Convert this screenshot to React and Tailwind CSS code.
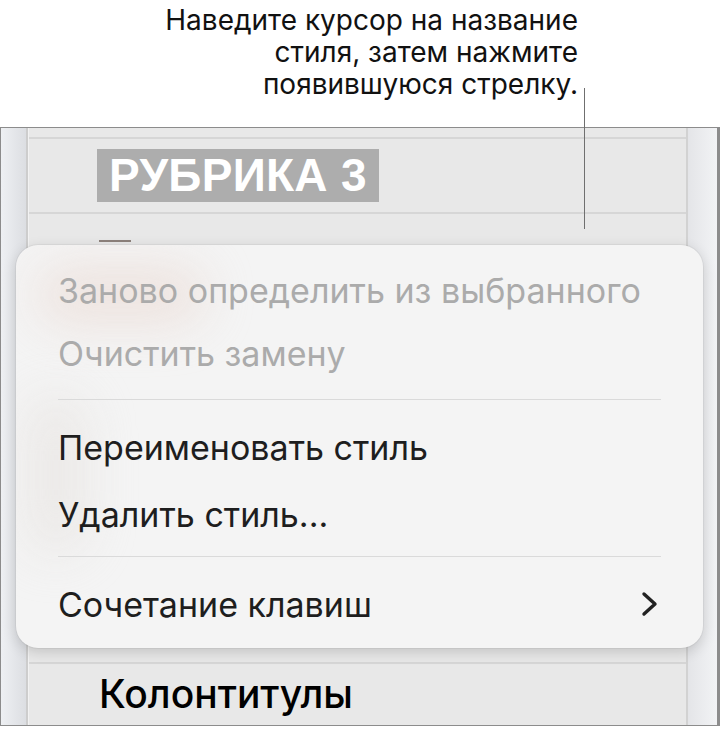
import { useState } from "react";

const MENU = [
  { label: "Заново определить из выбранного", disabled: true, h: "h-[62px]" },
  { label: "Очистить замену", disabled: true, h: "h-[64px]" },
  { sep: true, cls: "mt-[14px] mb-[13px]" },
  { label: "Переименовать стиль", h: "h-[69px]" },
  { label: "Удалить стиль...", h: "h-[64px]" },
  { sep: true, cls: "mt-[10px]" },
  { label: "Сочетание клавиш", h: "h-[90px] pt-[4px]", submenu: true },
];

function Chevron() {
  return (
    <svg width="18" height="26" viewBox="0 0 18 26" className="shrink-0">
      <polyline
        points="3,3 14,13 3,23"
        fill="none"
        stroke="#222"
        strokeWidth="3.4"
        strokeLinecap="round"
        strokeLinejoin="round"
      />
    </svg>
  );
}

function StyleMenu() {
  const [hover, setHover] = useState(null);

  return (
    <div className="absolute left-[16px] top-[245px] w-[687px] h-[403px] rounded-[22px] bg-[#f4f4f4] shadow-[0_4px_14px_rgba(0,0,0,0.16),0_0_0_1px_rgba(0,0,0,0.04)] overflow-hidden pt-[14px]">
      {/* blurred content showing through the menu */}
      <div className="absolute left-[20px] top-[20px] w-[170px] h-[60px] rounded-full bg-[#ead9d2] opacity-60 blur-xl" />
      <div className="absolute left-[10px] top-[150px] w-[60px] h-[160px] rounded-full bg-[#e6e2df] opacity-60 blur-xl" />

      <div className="relative flex flex-col">
        {MENU.map((item, i) =>
          item.sep ? (
            <div key={i} className={`mx-[42px] h-px bg-[#dadada] ${item.cls}`} />
          ) : (
            <div
              key={i}
              onMouseEnter={() => setHover(i)}
              onMouseLeave={() => setHover(null)}
              className={`flex items-center justify-between pl-[42px] pr-[44px] text-[34px] ${item.h} ${
                item.disabled ? "text-[#ababab]" : "text-[#1e1e1e]"
              } ${hover === i && !item.disabled ? "bg-[#ececec]" : ""}`}
            >
              <span>{item.label}</span>
              {item.submenu && <Chevron />}
            </div>
          )
        )}
      </div>
    </div>
  );
}

export default function App() {
  return (
    <div
      className="relative w-[721px] h-[729px] bg-white overflow-hidden"
      style={{ fontFamily: "Inter, 'Noto Sans', sans-serif" }}
    >
      {/* callout */}
      <div className="h-[127px] pt-[4px] pr-[143px] text-right text-[28px] leading-[32px] text-[#111]">
        <p>Наведите курсор на название</p>
        <p>стиля, затем нажмите</p>
        <p>появившуюся стрелку.</p>
      </div>

      {/* style list panel */}
      <div className="flex w-[720px] h-[599px] border-l border-t border-b border-r-[3px] border-[#8c8c8c]">
        <div className="w-[27px] bg-gradient-to-r from-[#eef0f3] to-[#dcdee2] border-r-2 border-[#cdcdcd]" />
        <div className="w-px bg-[#f2f2f2]" />
        <div className="flex-1 flex flex-col bg-[#e8e8e8]">
          <div className="h-[11px] border-b-2 border-[#d6d6d6]" />
          <div className="h-[75px] flex items-center pl-[68px] border-b-2 border-[#d6d6d6]">
            <span
              className="bg-[#adadad] text-white font-bold text-[46px] leading-[53px] px-[12px] tracking-[0.3px]"
              style={{ fontFamily: "'Liberation Sans', Arial, sans-serif" }}
            >
              РУБРИКА 3
            </span>
          </div>
          <div className="flex-1 border-b-2 border-[#d6d6d6] pl-[70px] pt-[26px]">
            <div className="w-[32px] h-[2px] bg-[#8d827c]" />
          </div>
          <div className="h-[61px] flex items-center pl-[70px]">
            <span className="text-[39px] text-black font-medium">Колонтитулы</span>
          </div>
        </div>
        <div className="w-[31px] border-l-2 border-[#d2d2d2] bg-gradient-to-r from-[#e4e5e8] to-[#f2f3f5]" />
      </div>

      {/* leader line */}
      <div className="absolute left-[584px] top-[88px] w-px h-[141px] bg-[#6f6f6f]" />

      <StyleMenu />
    </div>
  );
}
